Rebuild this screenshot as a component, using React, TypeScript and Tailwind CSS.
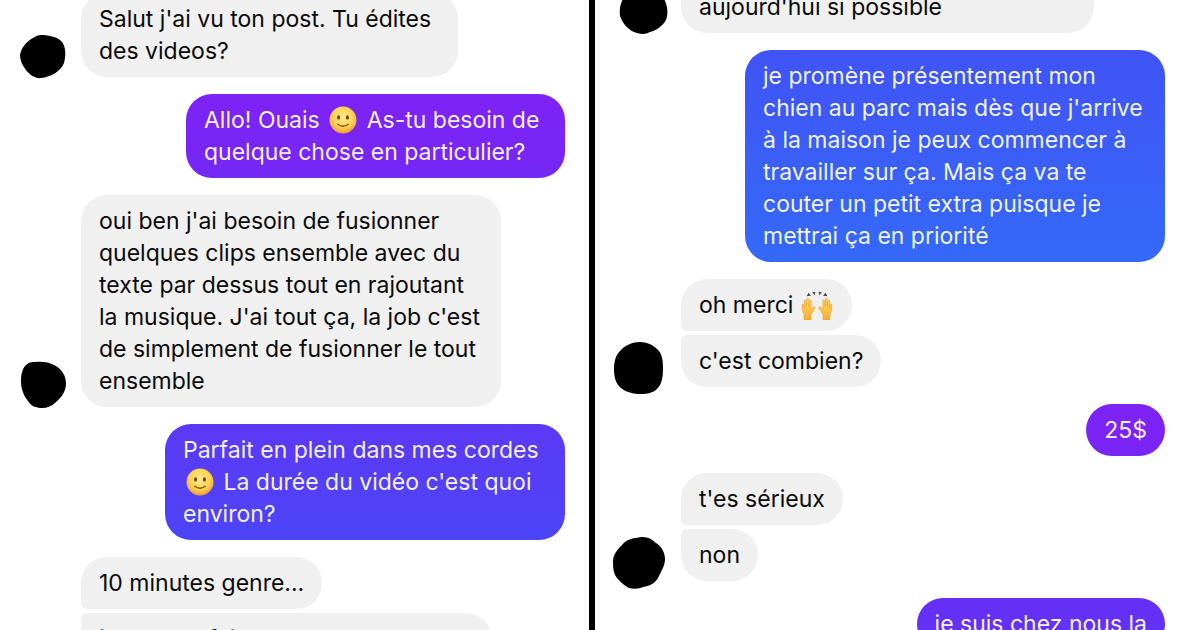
import React from 'react';
import clsx from 'clsx';

const SmileEmoji = () => (
  <svg viewBox="0 0 34 28" role="img" aria-label="sourire" className="inline-block w-[34px] h-7 -mt-1 align-middle">
    <defs>
      <radialGradient id="smile-face" cx="0.5" cy="0.4" r="0.6">
        <stop offset="0" stopColor="#ffe98a" />
        <stop offset="0.6" stopColor="#fdd458" />
        <stop offset="1" stopColor="#efa02c" />
      </radialGradient>
    </defs>
    <circle cx="17" cy="14" r="13.5" fill="url(#smile-face)" />
    <ellipse cx="12.6" cy="11.4" rx="1.5" ry="2.2" fill="#6b4216" />
    <ellipse cx="21.4" cy="11.4" rx="1.5" ry="2.2" fill="#6b4216" />
    <path d="M11.8 18.3 Q17 22.3 22.2 18.3" fill="none" stroke="#7a4c18" strokeWidth="1.4" strokeLinecap="round" />
  </svg>
);

const Hand = () => (
  <path
    d="M3 29 L3 23.5 C1.5 21.5 1 18 1 14 C1 12.6 2.7 12.6 2.9 14 L3.3 16.5 L3.2 10 C3.2 8.5 5 8.5 5.1 10 L5.5 15 L5.8 8.2 C5.9 6.8 7.7 6.8 7.7 8.2 L7.8 15 L8.6 9.7 C8.9 8.4 10.5 8.7 10.4 10 L10 18 L12.3 16 C13.6 15.2 14.8 16.2 14 17.3 C12.5 19.5 11.5 22 10 23.7 L10 29 Z"
    fill="url(#hand-skin)"
    stroke="#e29a27"
    strokeWidth="0.5"
    strokeLinejoin="round"
  />
);

const HandsEmoji = () => (
  <svg viewBox="-1 -1 34 30" role="img" aria-label="mains levées" className="inline-block w-[34px] h-[30px] -mt-1 align-middle">
    <defs>
      <linearGradient id="hand-skin" x1="0" y1="0" x2="0" y2="1">
        <stop offset="0" stopColor="#ffd75e" />
        <stop offset="1" stopColor="#f3ae35" />
      </linearGradient>
    </defs>
    <Hand />
    <g transform="translate(32 0) scale(-1 1)">
      <Hand />
    </g>
    <g fill="#4a4a4a">
      <path d="M5.5 5.2 L7.6 1.8 L10 4.8 Z" />
      <path d="M11.1 1.2 L14.3 0.7 L13.8 4.2 Z" />
      <path d="M17.7 0.7 L20.9 1.2 L18.2 4.2 Z" />
      <path d="M22 4.8 L24.4 1.8 L26.5 5.2 Z" />
    </g>
  </svg>
);

interface BubbleProps {
  sent?: boolean;
  className?: string;
  children: React.ReactNode;
}

const Bubble: React.FC<BubbleProps> = ({ sent, className, children }) => (
  <p
    className={clsx(
      'px-[18px] py-2.5 text-[23px] leading-8 whitespace-nowrap',
      sent ? 'self-end text-white/95' : 'bg-[#f0f0f0] text-[#0a0a0a]',
      className
    )}
  >
    {children}
  </p>
);

interface ReceivedProps {
  avatar?: string;
  wide?: boolean;
  className?: string;
  children: React.ReactNode;
}

// Received messages, with the sender's blacked out avatar at the bottom left
const Received: React.FC<ReceivedProps> = ({ avatar, wide, className, children }) => (
  <div className={clsx('flex items-end', className)}>
    <svg
      viewBox={wide ? '0 0 86 52' : '0 0 81 52'}
      className={clsx('h-[52px] shrink-0 overflow-visible', wide ? 'w-[86px]' : 'w-[81px]')}
      aria-hidden="true"
    >
      {avatar && <path d={avatar} fill="#000" />}
    </svg>
    <div className="flex flex-col items-start gap-1">{children}</div>
  </div>
);

const avatars = {
  first: 'M41 10 C49 10 58 12 62 17 C66 22 66 31 64 38 C61 46 51 52 41 53 C35 54 29 49 26 45 C22 40 20 35 20 30 C21 23 27 16 33 13 C36 11 38 10 41 10 Z',
  second: 'M35 7 C42 6 50 7 56 11 C62 15 66 21 66 28 C66 36 62 42 56 47 C52 51 47 53 42 53 C36 53 31 51 28 46 C24 41 21 34 21 27 C21 20 22 14 26 10 C29 7 32 7 35 7 Z',
  third: 'M48 6 C60 6 68 12 70 20 C73 26 73 34 71 39 C67 46 60 50 55 51 C50 54 44 53 39 51 C32 48 27 41 25 35 C24 27 26 21 29 16 C33 9 40 6 48 6 Z',
  fourth: 'M45 7 C52 7 58 10 62 14 C67 18 68 25 68 33 C68 42 67 49 62 54 C58 58 52 59 46 59 C38 59 31 57 26 53 C21 49 19 42 19 35 C19 28 20 21 25 16 C30 10 38 7 45 7 Z',
  fifth: 'M48 8 C53 8 57 10 61 14 C66 17 70 23 70 30 C70 36 67 41 64 47 C61 54 55 57 48 58 C44 60 38 60 34 59 C28 56 25 52 22 49 C18 44 18 37 18 31 C19 24 23 20 27 16 C31 11 37 9 41 9 C44 8 46 8 48 8 Z',
};

export default function App() {
  return (
    <main className="grid grid-cols-[589fr_6px_605fr] h-screen overflow-hidden bg-white font-['Inter','Liberation_Sans',sans-serif]">
      <section className="flex flex-col gap-[17px] min-w-0 overflow-hidden pr-6">
        <Received avatar={avatars.first} className="-mt-[7px]">
          <Bubble className="w-[377px] rounded-[26px]">
            Salut j'ai vu ton post. Tu édites
            <br />
            des videos?
          </Bubble>
        </Received>

        <Bubble sent className="w-[379px] rounded-[26px] bg-linear-to-b from-[#7f22f5] to-[#7428f5]">
          Allo! Ouais <SmileEmoji /> As-tu besoin de
          <br />
          quelque chose en particulier?
        </Bubble>

        <Received avatar={avatars.second}>
          <Bubble className="w-[420px] rounded-[26px]">
            oui ben j'ai besoin de fusionner
            <br />
            quelques clips ensemble avec du
            <br />
            texte par dessus tout en rajoutant
            <br />
            la musique. J'ai tout ça, la job c'est
            <br />
            de simplement de fusionner le tout
            <br />
            ensemble
          </Bubble>
        </Received>

        <Bubble sent className="w-[400px] rounded-[26px] bg-linear-to-b from-[#5c38f5] to-[#4c45f7]">
          Parfait en plein dans mes cordes
          <br />
          <SmileEmoji /> La durée du vidéo c'est quoi
          <br />
          environ?
        </Bubble>

        <Received>
          <Bubble className="rounded-[26px] rounded-bl-[6px]">10 minutes genre...</Bubble>
          <Bubble className="w-[411px] rounded-[26px] rounded-tl-[6px]">je veux le faire durer</Bubble>
        </Received>
      </section>

      <div className="bg-black" />

      <section className="flex flex-col gap-[17px] min-w-0 overflow-hidden pr-[35px]">
        <Received wide avatar={avatars.third} className="-mt-[19px]">
          <Bubble className="w-[413px] rounded-b-[26px]">aujourd'hui si possible</Bubble>
        </Received>

        <Bubble sent className="w-[420px] rounded-[26px] bg-linear-to-b from-[#4053f6] to-[#3469f8]">
          je promène présentement mon
          <br />
          chien au parc mais dès que j'arrive
          <br />
          à la maison je peux commencer à
          <br />
          travailler sur ça. Mais ça va te
          <br />
          couter un petit extra puisque je
          <br />
          mettrai ça en priorité
        </Bubble>

        <Received wide avatar={avatars.fourth}>
          <Bubble className="rounded-[26px] rounded-bl-[6px]">
            oh merci <HandsEmoji />
          </Bubble>
          <Bubble className="rounded-[26px] rounded-tl-[6px]">c'est combien?</Bubble>
        </Received>

        <Bubble sent className="rounded-[26px] bg-linear-to-b from-[#7f22f5] to-[#7825f5]">
          25$
        </Bubble>

        <Received wide avatar={avatars.fifth}>
          <Bubble className="rounded-[26px] rounded-bl-[6px]">t'es sérieux</Bubble>
          <Bubble className="rounded-[26px] rounded-tl-[6px]">non</Bubble>
        </Received>

        <Bubble sent className="rounded-[26px] bg-linear-to-b from-[#672ef5] to-[#5f34f5]">
          je suis chez nous la
        </Bubble>
      </section>
    </main>
  );
}
